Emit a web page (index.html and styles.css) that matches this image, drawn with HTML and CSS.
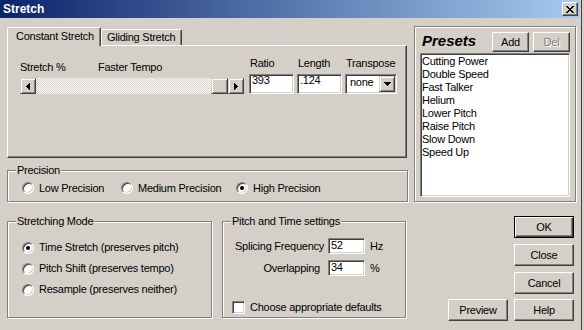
FILE: index.html
```html
<!DOCTYPE html>
<html>
<head>
<meta charset="utf-8">
<title>Stretch</title>
<link rel="stylesheet" href="styles.css">
</head>
<body>
<div class="window">
  <div class="titlebar">
    <span class="title">Stretch</span>
    <span class="capbtn">
      <svg width="8" height="7" viewBox="0 0 8 7" shape-rendering="crispEdges">
        <rect x="0" y="0" width="2" height="1"/><rect x="6" y="0" width="2" height="1"/>
        <rect x="1" y="1" width="2" height="1"/><rect x="5" y="1" width="2" height="1"/>
        <rect x="2" y="2" width="4" height="1"/>
        <rect x="3" y="3" width="2" height="1"/>
        <rect x="2" y="4" width="4" height="1"/>
        <rect x="1" y="5" width="2" height="1"/><rect x="5" y="5" width="2" height="1"/>
        <rect x="0" y="6" width="2" height="1"/><rect x="6" y="6" width="2" height="1"/>
      </svg>
    </span>
  </div>
  <div class="client">
    <div class="leftcol">
      <div class="tabstrip">
        <div class="tab active">Constant Stretch</div>
        <div class="tab inactive">Gliding Stretch</div>
      </div>
      <div class="tabpanel">
        <div class="slider">
          <div class="slabels"><span class="sl1">Stretch %</span><span>Faster Tempo</span></div>
          <div class="scrollbar">
            <span class="sbtn">
              <svg width="4" height="7" viewBox="0 0 4 7" shape-rendering="crispEdges"><rect x="0" y="3" width="1" height="1"/><rect x="1" y="2" width="1" height="3"/><rect x="2" y="1" width="1" height="5"/><rect x="3" y="0" width="1" height="7"/></svg>
            </span>
            <span class="track"></span>
            <span class="thumb"></span>
            <span class="sbtn">
              <svg width="4" height="7" viewBox="0 0 4 7" shape-rendering="crispEdges"><rect x="3" y="3" width="1" height="1"/><rect x="2" y="2" width="1" height="3"/><rect x="1" y="1" width="1" height="5"/><rect x="0" y="0" width="1" height="7"/></svg>
            </span>
          </div>
        </div>
        <div class="field f-ratio"><div class="flabel">Ratio</div><div class="edit">393</div></div>
        <div class="field f-length"><div class="flabel">Length</div><div class="edit">.124</div></div>
        <div class="field f-trans"><div class="flabel">Transpose</div>
          <div class="combo"><span class="ctext">none</span>
            <span class="cbtn"><svg width="7" height="4" viewBox="0 0 7 4" shape-rendering="crispEdges"><rect x="0" y="0" width="7" height="1"/><rect x="1" y="1" width="5" height="1"/><rect x="2" y="2" width="3" height="1"/><rect x="3" y="3" width="1" height="1"/></svg></span>
          </div>
        </div>
      </div>

      <div class="group precision">
        <span class="legend">Precision</span>
        <span class="opt o1"><span class="radio"></span>Low Precision</span>
        <span class="opt o2"><span class="radio"></span>Medium Precision</span>
        <span class="opt"><span class="radio checked"></span>High Precision</span>
      </div>

      <div class="bottomrow">
        <div class="group mode">
          <span class="legend">Stretching Mode</span>
          <span class="opt row"><span class="radio checked"></span>Time Stretch (preserves pitch)</span>
          <span class="opt row"><span class="radio"></span>Pitch Shift (preserves tempo)</span>
          <span class="opt row"><span class="radio"></span>Resample (preserves neither)</span>
        </div>
        <div class="group pitch">
          <span class="legend">Pitch and Time settings</span>
          <div class="ptgrid">
            <span class="plabel">Splicing Frequency</span><span class="edit small">52</span><span class="unit">Hz</span>
            <span class="plabel ov">Overlapping</span><span class="edit small">34</span><span class="unit">%</span>
          </div>
          <div class="checkrow"><span class="checkbox"></span>Choose appropriate defaults</div>
        </div>
      </div>
    </div>

    <div class="rightcol">
      <div class="group presets">
        <div class="phead">
          <span class="ptitle">Presets</span>
          <span class="btn add">Add</span>
          <span class="btn del disabled">Del</span>
        </div>
        <div class="listbox">
          <div>Cutting Power</div>
          <div>Double Speed</div>
          <div>Fast Talker</div>
          <div>Helium</div>
          <div>Lower Pitch</div>
          <div>Raise Pitch</div>
          <div>Slow Down</div>
          <div>Speed Up</div>
        </div>
      </div>
      <div class="buttons">
        <span class="btn big default">OK</span>
        <span class="btn big b-close">Close</span>
        <span class="btn big b-cancel">Cancel</span>
        <div class="brow">
          <span class="btn big">Preview</span>
          <span class="btn big">Help</span>
        </div>
      </div>
    </div>
  </div>
</div>
</body>
</html>
```

FILE: styles.css
```css
* { box-sizing: border-box; }
html, body { margin: 0; padding: 0; }
body {
  width: 584px;
  height: 330px;
  overflow: hidden;
  background: #d4d0c8;
  font-family: "Liberation Sans", Arial, sans-serif;
  font-size: 11px;
  line-height: 13px;
  letter-spacing: -0.25px;
  color: #000;
}

.window {
  width: 582px;
  height: 330px;
  background: #d4d0c8;
  border-right: 1px solid #404040;
  padding-right: 1px;
}

/* title bar */
.titlebar {
  height: 18px;
  display: flex;
  align-items: center;
  justify-content: space-between;
  padding: 0 2px 0 3px;
  background: linear-gradient(to right, #0a246a, #a6caf0);
}
.title {
  color: #fff;
  font-weight: bold;
  font-size: 12px;
  letter-spacing: 0;
}
.capbtn {
  width: 16px;
  height: 14px;
  background: #d4d0c8;
  border: 1px solid;
  border-color: #fff #404040 #404040 #fff;
  box-shadow: inset -1px -1px #808080;
  display: flex;
  align-items: center;
  justify-content: center;
}

/* client layout */
.client {
  display: flex;
  align-items: flex-start;
  padding: 8px 0 0 7px;
}
.leftcol { width: 401px; padding-top: 1px; }
.rightcol { width: 162px; margin-left: 6px; }

/* tabs */
.tabstrip {
  display: flex;
  align-items: flex-end;
  height: 18px;
}
.tab {
  height: 16px;
  border: 1px solid;
  border-bottom: 0;
  border-color: #fff #404040 transparent #fff;
  box-shadow: inset -1px 0 #808080;
  border-radius: 2px 2px 0 0;
  white-space: nowrap;
}
.tab.inactive {
  width: 81px;
  padding: 1px 0 0 5px;
}
.tab.active {
  width: 94px;
  height: 19px;
  margin-bottom: -1px;
  position: relative;
  z-index: 1;
  background: #d4d0c8;
  padding: 2px 0 0 8px;
}
.tabpanel {
  width: 400px;
  height: 113px;
  border: 1px solid;
  border-color: #fff #404040 #404040 #fff;
  box-shadow: inset -1px -1px #808080;
  display: flex;
  align-items: flex-start;
  padding: 11px 0 0 12px;
}

/* slider */
.slider { width: 224px; margin-top: 4px; }
.slabels { display: flex; height: 13px; white-space: nowrap; }
.sl1 { width: 78px; }
.scrollbar {
  display: flex;
  height: 16px;
  margin-top: 4px;
}
.sbtn, .thumb, .cbtn {
  width: 16px;
  height: 16px;
  background: #d4d0c8;
  border: 1px solid;
  border-color: #d4d0c8 #404040 #404040 #d4d0c8;
  box-shadow: inset 1px 1px #fff, inset -1px -1px #808080;
  display: flex;
  align-items: center;
  justify-content: center;
}
.thumb { width: 17px; }
.track {
  flex: 1;
  background: repeating-conic-gradient(#fff 0 25%, #d4d0c8 0 50%) 0 0 / 2px 2px;
}

/* fields */
.field { display: flex; flex-direction: column; }
.flabel { height: 13px; padding-left: 1px; margin-bottom: 4px; white-space: nowrap; }
.f-ratio { width: 45px; margin-left: 5px; }
.f-length { width: 45px; margin-left: 3px; }
.f-trans { width: 52px; margin-left: 3px; }

.edit, .combo, .listbox, .checkbox {
  background: #fff;
  border: 1px solid;
  border-color: #808080 #fff #fff #808080;
  box-shadow: inset 1px 1px #404040, inset -1px -1px #d4d0c8;
}
.edit {
  height: 20px;
  padding: 0 0 0 2px;
  line-height: 11px;
}
.combo {
  height: 20px;
  display: flex;
  justify-content: space-between;
  padding: 1px;
}
.ctext { padding-left: 3px; line-height: 12px; }

/* group boxes */
.group {
  position: relative;
  border: 1px solid #808080;
  box-shadow: inset 1px 1px #fff, 1px 1px #fff;
}
.legend {
  position: absolute;
  top: -7px;
  left: 8px;
  padding: 0 1px;
  background: #d4d0c8;
  white-space: nowrap;
}

.precision {
  margin-top: 12px;
  height: 32px;
  display: flex;
  align-items: center;
  padding: 4px 0 0 14px;
}
.opt {
  display: flex;
  align-items: center;
  gap: 5px;
  white-space: nowrap;
}
.o1 { width: 99px; }
.o2 { width: 115px; }

.radio {
  position: relative;
  width: 12px;
  height: 12px;
  border-radius: 50%;
  background: #fff;
  border: 1px solid;
  border-color: #808080 #fff #fff #808080;
  box-shadow: inset 1px 1px #404040, inset -1px -1px #d4d0c8;
  flex: none;
}
.radio.checked::after {
  content: "";
  position: absolute;
  left: 3px;
  top: 3px;
  width: 4px;
  height: 4px;
  border-radius: 50%;
  background: #000;
}

.bottomrow {
  display: flex;
  margin-top: 19px;
}
.mode {
  width: 205px;
  height: 97px;
  padding: 15px 0 0 14px;
}
.mode .row { height: 21px; }

.pitch {
  width: 184px;
  height: 97px;
  margin-left: 10px;
  padding: 16px 0 0 0;
}
.ptgrid {
  display: grid;
  grid-template-columns: 88px 37px auto;
  grid-auto-rows: 16px;
  column-gap: 5px;
  row-gap: 6px;
  margin-left: 12px;
  align-items: center;
}
.plabel { text-align: right; white-space: nowrap; }
.plabel.ov { padding-right: 3px; }
.edit.small { height: 16px; line-height: 13px; padding-left: 2px; }
.checkrow {
  display: flex;
  align-items: center;
  gap: 5px;
  height: 13px;
  margin: 25px 0 0 9px;
  white-space: nowrap;
}
.checkbox { width: 13px; height: 13px; flex: none; }

/* presets */
.presets {
  height: 176px;
  padding: 5px 5px 4px 5px;
}
.phead {
  display: flex;
  height: 20px;
  align-items: flex-start;
}
.ptitle {
  flex: 1;
  padding-left: 2px;
  font-weight: bold;
  font-style: italic;
  font-size: 15px;
  line-height: 18px;
  letter-spacing: 0;
  color: #000;
}
.btn {
  display: flex;
  align-items: center;
  justify-content: center;
  background: #d4d0c8;
  border: 1px solid;
  border-color: #fff #404040 #404040 #fff;
  box-shadow: inset -1px -1px #808080;
  white-space: nowrap;
}
.add, .del { width: 37px; height: 20px; line-height: 18px; }
.del { margin-left: 4px; }
.disabled { color: #808080; text-shadow: 1px 1px #fff; }

.listbox {
  margin-top: 1px;
  height: 144px;
  padding: 1px 0 0 1px;
}
.listbox div { height: 13px; white-space: nowrap; }

.buttons {
  display: flex;
  flex-direction: column;
  align-items: flex-end;
  margin-top: 14px;
  padding-right: 2px;
}
.btn.big { width: 60px; height: 22px; line-height: 20px; }
.btn.default {
  border-color: #000;
  box-shadow: inset 1px 1px #fff, inset -1px -1px #404040, inset -2px -2px #808080;
}
.b-close, .b-cancel { margin-top: 6px; }
.brow {
  display: flex;
  gap: 6px;
  margin-top: 5px;
}
```
